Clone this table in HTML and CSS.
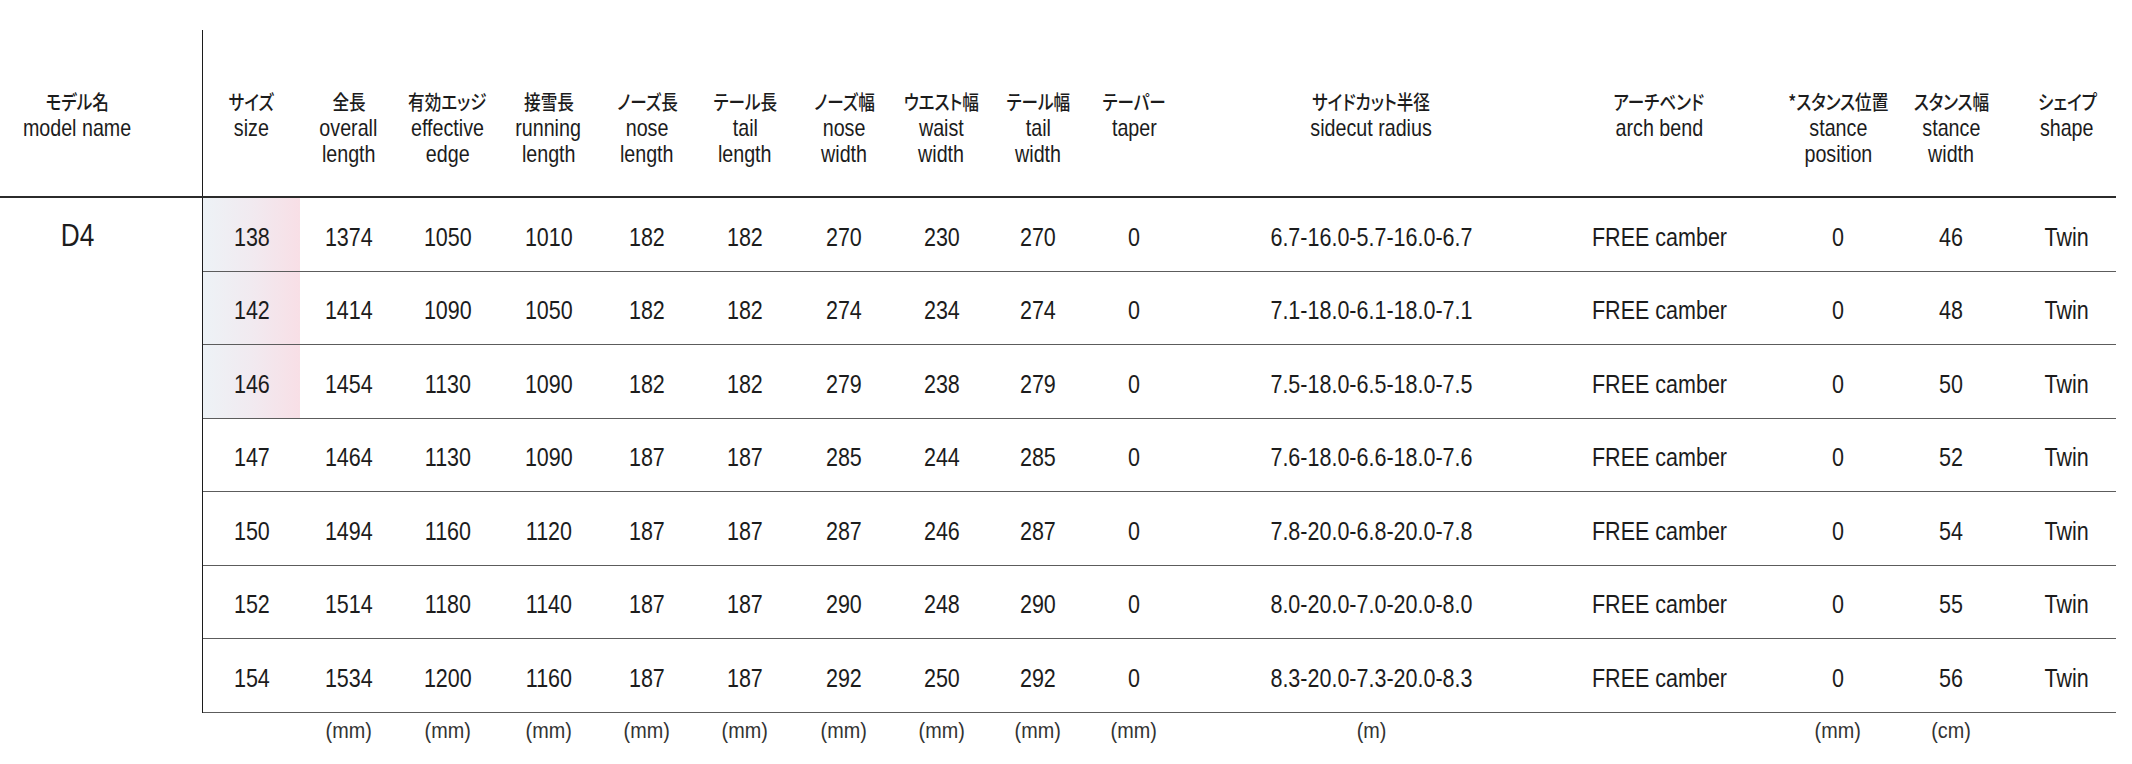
FILE: index.html
```html
<!DOCTYPE html>
<html lang="ja">
<head>
<meta charset="utf-8">
<title>D4 spec</title>
<link rel="stylesheet" href="styles.css">
</head>
<body>
<div class="sheet">
  <div class="head">
    <div class="hcell model-h"><span class="jp">モデル名</span><span>model name</span></div>
    <div class="cols hcols">
      <div class="hcell"><span class="jp">サイズ</span><span>size</span></div>
      <div class="hcell"><span class="jp">全長</span><span>overall</span><span>length</span></div>
      <div class="hcell"><span class="jp">有効エッジ</span><span>effective</span><span>edge</span></div>
      <div class="hcell"><span class="jp">接雪長</span><span>running</span><span>length</span></div>
      <div class="hcell"><span class="jp">ノーズ長</span><span>nose</span><span>length</span></div>
      <div class="hcell"><span class="jp">テール長</span><span>tail</span><span>length</span></div>
      <div class="hcell"><span class="jp">ノーズ幅</span><span>nose</span><span>width</span></div>
      <div class="hcell"><span class="jp">ウエスト幅</span><span>waist</span><span>width</span></div>
      <div class="hcell"><span class="jp">テール幅</span><span>tail</span><span>width</span></div>
      <div class="hcell"><span class="jp">テーパー</span><span>taper</span></div>
      <div class="hcell"><span class="jp">サイドカット半径</span><span>sidecut radius</span></div>
      <div class="hcell"><span class="jp">アーチベンド</span><span>arch bend</span></div>
      <div class="hcell"><span class="jp">*スタンス位置</span><span>stance</span><span>position</span></div>
      <div class="hcell"><span class="jp">スタンス幅</span><span>stance</span><span>width</span></div>
      <div class="hcell shape"><span class="jp">シェイプ</span><span>shape</span></div>
    </div>
  </div>

  <div class="body">
    <div class="model"><span>D4</span></div>
    <div class="rows">
      <div class="cols row">
        <div class="cell hl"><span>138</span></div><div class="cell"><span>1374</span></div><div class="cell"><span>1050</span></div><div class="cell"><span>1010</span></div><div class="cell"><span>182</span></div><div class="cell"><span>182</span></div><div class="cell"><span>270</span></div><div class="cell"><span>230</span></div><div class="cell"><span>270</span></div><div class="cell"><span>0</span></div><div class="cell"><span>6.7-16.0-5.7-16.0-6.7</span></div><div class="cell"><span>FREE camber</span></div><div class="cell"><span>0</span></div><div class="cell"><span>46</span></div><div class="cell shape"><span>Twin</span></div>
      </div>
      <div class="cols row">
        <div class="cell hl"><span>142</span></div><div class="cell"><span>1414</span></div><div class="cell"><span>1090</span></div><div class="cell"><span>1050</span></div><div class="cell"><span>182</span></div><div class="cell"><span>182</span></div><div class="cell"><span>274</span></div><div class="cell"><span>234</span></div><div class="cell"><span>274</span></div><div class="cell"><span>0</span></div><div class="cell"><span>7.1-18.0-6.1-18.0-7.1</span></div><div class="cell"><span>FREE camber</span></div><div class="cell"><span>0</span></div><div class="cell"><span>48</span></div><div class="cell shape"><span>Twin</span></div>
      </div>
      <div class="cols row">
        <div class="cell hl"><span>146</span></div><div class="cell"><span>1454</span></div><div class="cell"><span>1130</span></div><div class="cell"><span>1090</span></div><div class="cell"><span>182</span></div><div class="cell"><span>182</span></div><div class="cell"><span>279</span></div><div class="cell"><span>238</span></div><div class="cell"><span>279</span></div><div class="cell"><span>0</span></div><div class="cell"><span>7.5-18.0-6.5-18.0-7.5</span></div><div class="cell"><span>FREE camber</span></div><div class="cell"><span>0</span></div><div class="cell"><span>50</span></div><div class="cell shape"><span>Twin</span></div>
      </div>
      <div class="cols row">
        <div class="cell"><span>147</span></div><div class="cell"><span>1464</span></div><div class="cell"><span>1130</span></div><div class="cell"><span>1090</span></div><div class="cell"><span>187</span></div><div class="cell"><span>187</span></div><div class="cell"><span>285</span></div><div class="cell"><span>244</span></div><div class="cell"><span>285</span></div><div class="cell"><span>0</span></div><div class="cell"><span>7.6-18.0-6.6-18.0-7.6</span></div><div class="cell"><span>FREE camber</span></div><div class="cell"><span>0</span></div><div class="cell"><span>52</span></div><div class="cell shape"><span>Twin</span></div>
      </div>
      <div class="cols row">
        <div class="cell"><span>150</span></div><div class="cell"><span>1494</span></div><div class="cell"><span>1160</span></div><div class="cell"><span>1120</span></div><div class="cell"><span>187</span></div><div class="cell"><span>187</span></div><div class="cell"><span>287</span></div><div class="cell"><span>246</span></div><div class="cell"><span>287</span></div><div class="cell"><span>0</span></div><div class="cell"><span>7.8-20.0-6.8-20.0-7.8</span></div><div class="cell"><span>FREE camber</span></div><div class="cell"><span>0</span></div><div class="cell"><span>54</span></div><div class="cell shape"><span>Twin</span></div>
      </div>
      <div class="cols row">
        <div class="cell"><span>152</span></div><div class="cell"><span>1514</span></div><div class="cell"><span>1180</span></div><div class="cell"><span>1140</span></div><div class="cell"><span>187</span></div><div class="cell"><span>187</span></div><div class="cell"><span>290</span></div><div class="cell"><span>248</span></div><div class="cell"><span>290</span></div><div class="cell"><span>0</span></div><div class="cell"><span>8.0-20.0-7.0-20.0-8.0</span></div><div class="cell"><span>FREE camber</span></div><div class="cell"><span>0</span></div><div class="cell"><span>55</span></div><div class="cell shape"><span>Twin</span></div>
      </div>
      <div class="cols row">
        <div class="cell"><span>154</span></div><div class="cell"><span>1534</span></div><div class="cell"><span>1200</span></div><div class="cell"><span>1160</span></div><div class="cell"><span>187</span></div><div class="cell"><span>187</span></div><div class="cell"><span>292</span></div><div class="cell"><span>250</span></div><div class="cell"><span>292</span></div><div class="cell"><span>0</span></div><div class="cell"><span>8.3-20.0-7.3-20.0-8.3</span></div><div class="cell"><span>FREE camber</span></div><div class="cell"><span>0</span></div><div class="cell"><span>56</span></div><div class="cell shape"><span>Twin</span></div>
      </div>
    </div>
  </div>

  <div class="units">
    <div></div>
    <div class="cols ucols">
      <div class="ucell"></div><div class="ucell"><span>(mm)</span></div><div class="ucell"><span>(mm)</span></div><div class="ucell"><span>(mm)</span></div><div class="ucell"><span>(mm)</span></div><div class="ucell"><span>(mm)</span></div><div class="ucell"><span>(mm)</span></div><div class="ucell"><span>(mm)</span></div><div class="ucell"><span>(mm)</span></div><div class="ucell"><span>(mm)</span></div><div class="ucell"><span>(m)</span></div><div class="ucell"></div><div class="ucell"><span>(mm)</span></div><div class="ucell"><span>(cm)</span></div><div class="ucell"></div>
    </div>
  </div>
</div>
</body>
</html>
```

FILE: styles.css
```css
* { box-sizing: border-box; }

body {
  margin: 0;
  background: #ffffff;
  color: #1c1c1c;
  font-family: "Liberation Sans", Arial, sans-serif;
}

.sheet {
  width: 2116px;
  padding-top: 30px;
}

.cols {
  display: grid;
  grid-template-columns: 97px 97px 101px 101px 96px 100px 98px 97px 96px 96px 378px 198px 160px 66px 132px;
}

/* narrow rendering of the condensed face */
.hcell > span,
.cell > span,
.model > span,
.ucell > span {
  display: block;
  transform: scaleX(0.82);
  transform-origin: 50% 50%;
}

/* header */
.head {
  display: grid;
  grid-template-columns: 202px 1914px;
  height: 168px;
  border-bottom: 2px solid #2b2b2b;
}

.hcols {
  border-left: 1px solid #1c1c1c;
}

.hcell {
  display: flex;
  flex-direction: column;
  align-items: center;
  padding-top: 59px;
  font-size: 24px;
  line-height: 26px;
  white-space: nowrap;
}

.model-h {
  padding-right: 48px;
}

.hcell > .jp {
  font-family: "Noto Sans CJK JP", sans-serif;
  font-size: 20px;
  font-weight: 500;
  font-feature-settings: "palt";
  transform: scaleX(0.83);
}

.shape {
  padding-left: 34px;
}

/* body */
.body {
  display: grid;
  grid-template-columns: 202px 1914px;
}

.model {
  display: flex;
  justify-content: center;
  padding-right: 48px;
  padding-top: 19px;
  font-size: 32px;
  line-height: 36px;
}

.rows {
  border-left: 1px solid #1c1c1c;
}

.row {
  height: 73.5px;
  border-bottom: 1px solid #5c5c5c;
}

.cell {
  display: flex;
  align-items: center;
  justify-content: center;
  padding-top: 6px;
  font-size: 25px;
  white-space: nowrap;
}

.cell > span {
  transform: scaleX(0.86);
}

.cell.shape {
  padding-left: 34px;
}

.hl {
  background: linear-gradient(90deg, #edf2f6 0%, #f1eaf0 50%, #f8dfe6 100%);
}

/* units */
.units {
  display: grid;
  grid-template-columns: 202px 1914px;
  padding-left: 1px;
}

.ucell {
  display: flex;
  justify-content: center;
  padding-top: 6px;
  font-size: 22px;
  line-height: 24px;
  color: #333333;
  white-space: nowrap;
}

.ucell > span {
  transform: scaleX(0.9);
}
```
